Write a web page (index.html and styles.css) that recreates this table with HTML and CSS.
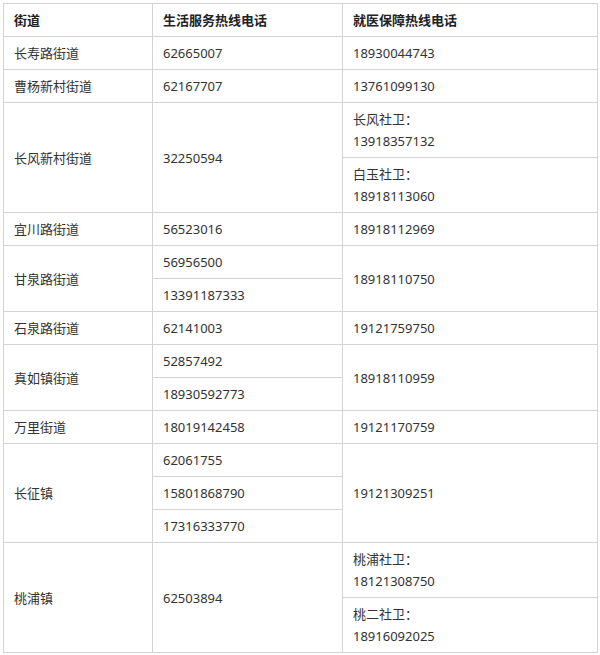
FILE: index.html
```html
<!DOCTYPE html>
<html lang="zh-CN">
<head>
<meta charset="utf-8">
<title>热线电话</title>
<link rel="stylesheet" href="styles.css">
</head>
<body>
<table class="hotline">
  <colgroup>
    <col class="c1"><col class="c2"><col class="c3">
  </colgroup>
  <thead>
    <tr><th>街道</th><th>生活服务热线电话</th><th>就医保障热线电话</th></tr>
  </thead>
  <tbody>
    <tr><td>长寿路街道</td><td>62665007</td><td>18930044743</td></tr>
    <tr><td>曹杨新村街道</td><td>62167707</td><td>13761099130</td></tr>
    <tr><td rowspan="2">长风新村街道</td><td rowspan="2">32250594</td><td>长风社卫：<br>13918357132</td></tr>
    <tr><td>白玉社卫：<br>18918113060</td></tr>
    <tr><td>宜川路街道</td><td>56523016</td><td>18918112969</td></tr>
    <tr><td rowspan="2">甘泉路街道</td><td>56956500</td><td rowspan="2">18918110750</td></tr>
    <tr><td>13391187333</td></tr>
    <tr><td>石泉路街道</td><td>62141003</td><td>19121759750</td></tr>
    <tr><td rowspan="2">真如镇街道</td><td>52857492</td><td rowspan="2">18918110959</td></tr>
    <tr><td>18930592773</td></tr>
    <tr><td>万里街道</td><td>18019142458</td><td>19121170759</td></tr>
    <tr><td rowspan="3">长征镇</td><td>62061755</td><td rowspan="3">19121309251</td></tr>
    <tr><td>15801868790</td></tr>
    <tr><td>17316333770</td></tr>
    <tr><td rowspan="2">桃浦镇</td><td rowspan="2">62503894</td><td>桃浦社卫：<br>18121308750</td></tr>
    <tr><td>桃二社卫：<br>18916092025</td></tr>
  </tbody>
</table>
</body>
</html>
```
FILE: styles.css
```css
html, body {
  margin: 0;
  padding: 0;
  background: #fff;
}
body {
  padding: 3px 4px 0 3px;
  font-family: "Noto Sans", "Noto Sans CJK SC", sans-serif;
  font-size: 13px;
  color: #333;
}
.hotline {
  width: 594px;
  border-collapse: collapse;
  table-layout: fixed;
}
.hotline .c1 { width: 149px; }
.hotline .c2 { width: 190px; }
.hotline .c3 { width: 255px; }
.hotline th,
.hotline td {
  border: 1px solid #d3d3d3;
  padding: 5px 10px;
  line-height: 22px;
  text-align: left;
  vertical-align: middle;
}
.hotline th {
  font-weight: bold;
  color: #222;
}
```
